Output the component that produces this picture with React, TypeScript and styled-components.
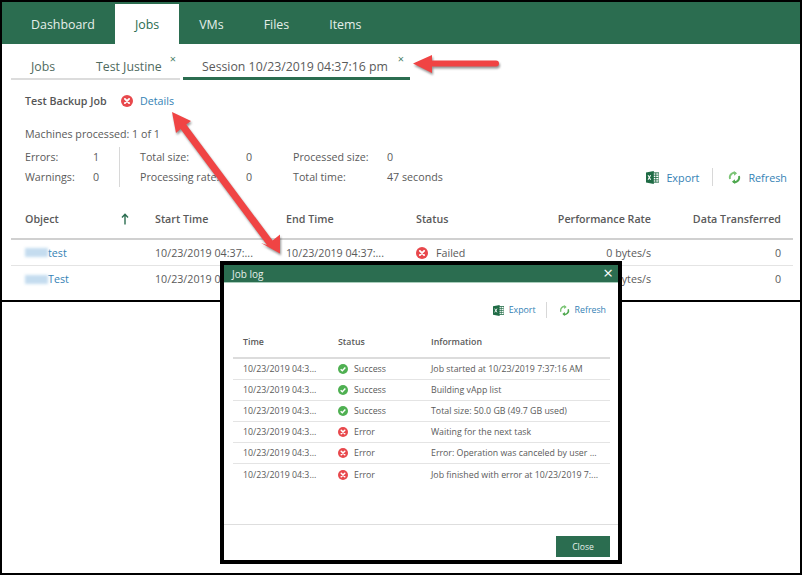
import React from 'react'
import styled, { createGlobalStyle } from 'styled-components'

const GlobalStyle = createGlobalStyle`
  html, body { margin: 0; padding: 0; background: #fff; }
  body { font-family: "Open Sans", "Liberation Sans", sans-serif; color: #5a5a5a; }
  * { box-sizing: border-box; }
`

const GREEN = '#2b6d50'
const LINK = '#3482b5'

const Frame = styled.div`
  position: relative;
  width: 802px;
  height: 575px;
  border: 2px solid #000;
  overflow: hidden;
`

const Panel = styled.section`
  height: 300px;
  border-bottom: 2px solid #000;
`

const Header = styled.header`
  display: flex;
  align-items: flex-end;
  height: 42px;
  padding-left: 9px;
  background: ${GREEN};
`

const MainTab = styled.div<{ $active?: boolean }>`
  display: flex;
  align-items: center;
  height: 40px;
  padding: 0 20px;
  font-size: 12.4px;
  color: ${p => (p.$active ? GREEN : '#e6efea')};
  background: ${p => (p.$active ? '#fff' : 'transparent')};
`

const SubTabs = styled.nav`
  display: flex;
  align-items: flex-end;
  gap: 3px;
  height: 36px;
  padding-left: 9px;
`

const SubGroup = styled.div`
  display: flex;
  width: 169px;
  height: 35px;
  border-bottom: 2px solid #dcdcdc;
`

const SubTab = styled.div<{ $active?: boolean; $width: number; $pad: number }>`
  display: flex;
  width: ${p => p.$width}px;
  padding-left: ${p => p.$pad}px;
  padding-top: 14px;
  font-size: 12.3px;
  line-height: 16px;
  color: #4f6a5e;
  white-space: nowrap;
`

const SessionTab = styled(SubTab)`
  height: 36px;
  padding-top: 15px;
  border-bottom: 3px solid ${GREEN};
  color: #5a5a5a;
`

const TabClose = styled.span<{ $gap: number }>`
  margin-left: ${p => p.$gap}px;
  margin-top: -6px;
  font-size: 11px;
  line-height: 12px;
  color: #4c7f6a;
`

const Summary = styled.div`
  padding: 12px 13px 0 23px;
`

const TitleRow = styled.div`
  display: flex;
  align-items: center;
  height: 18px;
  font-size: 10.7px;
`

const JobTitle = styled.strong`
  width: 96px;
  font-weight: 600;
  color: #555;
`

const LinkText = styled.span`
  color: ${LINK};
`

const DetailsLink = styled(LinkText)`
  margin-left: 7px;
`

const Machines = styled.div`
  margin-top: 15px;
  height: 18px;
  font-size: 10.7px;
  line-height: 18px;
`

const StatsRow = styled.div`
  display: flex;
  align-items: stretch;
  margin-top: 1px;
  height: 46px;
  padding: 3px 0;
`

const StatGroup = styled.dl<{ $label: number; $width: number; $left?: number; $rule?: boolean }>`
  display: grid;
  grid-template-columns: ${p => p.$label}px 1fr;
  grid-auto-rows: 20px;
  align-items: center;
  margin: 0;
  width: ${p => p.$width}px;
  padding-left: ${p => p.$left || 0}px;
  border-right: ${p => (p.$rule ? '1px solid #d8d8d8' : 'none')};
  font-size: 10.7px;
  white-space: nowrap;
`

const StatLabel = styled.dt``
const StatValue = styled.dd`
  margin: 0;
`

const Actions = styled.div<{ $small?: boolean }>`
  display: flex;
  align-items: center;
  justify-content: flex-end;
  gap: ${p => (p.$small ? 5 : 7)}px;
  font-size: ${p => (p.$small ? 8.8 : 10.8)}px;
  color: ${LINK};
`

const MainActions = styled(Actions)`
  margin-left: auto;
  align-self: flex-end;
  height: 20px;
`

const ActionRule = styled.span<{ $small?: boolean }>`
  width: 1px;
  height: ${p => (p.$small ? 16 : 18)}px;
  margin: 0 ${p => (p.$small ? 7 : 8)}px 0 ${p => (p.$small ? 5 : 6)}px;
  background: #d8d8d8;
`

const Table = styled.div`
  margin: 10px 7px 0 9px;
  font-size: 10.7px;
`

const Row = styled.div<{ $head?: boolean }>`
  display: grid;
  grid-template-columns: 96px 34px 131px 130px 112px 123px 130px;
  align-items: center;
  height: ${p => (p.$head ? 40 : 26)}px;
  padding: 0 12px 0 14px;
  border-bottom: ${p => (p.$head ? '2px solid #d0d0d0' : '1px solid #e4e4e4')};
  font-weight: ${p => (p.$head ? 600 : 400)};
  white-space: nowrap;
  &:last-child { border-bottom: none; }
`

const RightCell = styled.span`
  text-align: right;
`

const NameCell = styled.span`
  display: flex;
  align-items: center;
  color: ${LINK};
`

const Smudge = styled.span`
  width: 23px;
  height: 9px;
  background: #c4dcef;
  filter: blur(1.6px);
`

const StatusCell = styled.span<{ $gap: number }>`
  display: flex;
  align-items: center;
  gap: ${p => p.$gap}px;
`

const Modal = styled.div`
  position: absolute;
  left: 218px;
  top: 259px;
  display: flex;
  flex-direction: column;
  width: 402px;
  height: 303px;
  border: 4px solid #000;
  background: #fff;
`

const ModalHeader = styled.div`
  display: flex;
  align-items: center;
  justify-content: space-between;
  height: 18px;
  padding: 0 5px 0 8px;
  background: ${GREEN};
  border-bottom: 1px solid #a9cdbb;
  font-size: 10px;
  color: #e6efea;
`

const ModalClose = styled.span`
  margin-top: -2px;
  font-size: 17px;
  line-height: 15px;
  color: #fff;
`

const ModalActions = styled(Actions)`
  height: 18px;
  margin: 18px 12px 0 0;
`

const ModalTable = styled.div`
  flex: 1;
  margin: 7px 8px 0 9px;
  font-size: 8.8px;
`

const ModalRow = styled.div<{ $head?: boolean }>`
  display: grid;
  grid-template-columns: 95px 93px 1fr;
  align-items: center;
  height: ${p => (p.$head ? 33 : 21)}px;
  padding-left: 10px;
  border-bottom: ${p => (p.$head ? '2px solid #dcdcdc' : '1px solid #e4e4e4')};
  font-weight: ${p => (p.$head ? 600 : 400)};
  white-space: nowrap;
  &:last-child { border-bottom: none; }
`

const ModalFooter = styled.div`
  display: flex;
  justify-content: flex-end;
  height: 36px;
  padding: 11px 8px 0 0;
  border-top: 1px solid #dedede;
`

const CloseButton = styled.button`
  width: 54px;
  height: 21px;
  padding: 0;
  border: none;
  background: ${GREEN};
  color: #e6efea;
  font: 400 8.6px "Open Sans", sans-serif;
`

const ArrowLayer = styled.svg`
  position: absolute;
  left: -2px;
  top: -2px;
  pointer-events: none;
  filter: drop-shadow(1px 2px 1.2px rgba(60, 60, 60, 0.55));
`

const ErrorIcon = ({ size = 12 }: { size?: number }) => (
  <svg width={size} height={size} viewBox="0 0 12 12">
    <circle cx="6" cy="6" r="6" fill="#e8484c" />
    <path d="M3.9 3.9l4.2 4.2M8.1 3.9L3.9 8.1" stroke="#fff" strokeWidth="1.9" strokeLinecap="round" />
  </svg>
)

const SuccessIcon = () => (
  <svg width={10} height={10} viewBox="0 0 12 12">
    <circle cx="6" cy="6" r="6" fill="#4fb052" />
    <path d="M3.2 6.2l2 2 3.6-4" stroke="#fff" strokeWidth="1.7" fill="none" />
  </svg>
)

const ExcelIcon = ({ size }: { size: number }) => (
  <svg width={size} height={size} viewBox="0 0 14 14">
    <rect x="7" y="2" width="7" height="10" fill="#fff" stroke="#1f6b45" strokeWidth="1" />
    <path d="M7.5 4.5h6M7.5 7h6M7.5 9.5h6M10.5 2v10" stroke="#1f6b45" strokeWidth="0.9" />
    <path d="M0 1.6L8.4 0v14L0 12.4z" fill="#1f6b45" />
    <path d="M2.2 4.6l2.8 4.8M5 4.6L2.2 9.4" stroke="#fff" strokeWidth="1.1" />
  </svg>
)

const RefreshIcon = ({ size }: { size: number }) => (
  <svg width={size} height={size} viewBox="0 0 14 14" fill="none">
    <path d="M2.2 8.6A5 5 0 0 1 8.4 2.2" stroke="#7cc576" strokeWidth="2" />
    <path d="M6.2 0l3.6 2.4L6.6 5z" fill="#7cc576" />
    <path d="M11.8 5.4A5 5 0 0 1 5.6 11.8" stroke="#4fa84f" strokeWidth="2" />
    <path d="M7.8 14L4.2 11.6 7.4 9z" fill="#4fa84f" />
  </svg>
)

const SortArrow = () => (
  <svg width={8} height={12} viewBox="0 0 8 12">
    <path d="M4 11.5V1.5M1 4.5L4 1.2l3 3.3" stroke={GREEN} strokeWidth="1.4" fill="none" />
  </svg>
)

const logRows = [
  ['Success', 'Job started at 10/23/2019 7:37:16 AM'],
  ['Success', 'Building vApp list'],
  ['Success', 'Total size: 50.0 GB (49.7 GB used)'],
  ['Error', 'Waiting for the next task'],
  ['Error', 'Error: Operation was canceled by user ...'],
  ['Error', 'Job finished with error at 10/23/2019 7:...'],
]

const jobRows = ['test', 'Test']

export default function App() {
  return (
    <Frame>
      <GlobalStyle />
      <Panel>
        <Header>
          <MainTab>Dashboard</MainTab>
          <MainTab $active>Jobs</MainTab>
          <MainTab>VMs</MainTab>
          <MainTab>Files</MainTab>
          <MainTab>Items</MainTab>
        </Header>
        <SubTabs>
          <SubGroup>
            <SubTab $width={85} $pad={20}>Jobs</SubTab>
            <SubTab $width={84} $pad={0}>
              Test Justine<TabClose $gap={8}>×</TabClose>
            </SubTab>
          </SubGroup>
          <SessionTab $width={227} $pad={19}>
            Session 10/23/2019 04:37:16 pm<TabClose $gap={10}>×</TabClose>
          </SessionTab>
        </SubTabs>
        <Summary>
          <TitleRow>
            <JobTitle>Test Backup Job</JobTitle>
            <ErrorIcon />
            <DetailsLink>Details</DetailsLink>
          </TitleRow>
          <Machines>Machines processed: 1 of 1</Machines>
          <StatsRow>
            <StatGroup $label={68} $width={95} $rule>
              <StatLabel>Errors:</StatLabel>
              <StatValue>1</StatValue>
              <StatLabel>Warnings:</StatLabel>
              <StatValue>0</StatValue>
            </StatGroup>
            <StatGroup $label={106} $width={173} $left={20}>
              <StatLabel>Total size:</StatLabel>
              <StatValue>0</StatValue>
              <StatLabel>Processing rate:</StatLabel>
              <StatValue>0</StatValue>
            </StatGroup>
            <StatGroup $label={94} $width={180}>
              <StatLabel>Processed size:</StatLabel>
              <StatValue>0</StatValue>
              <StatLabel>Total time:</StatLabel>
              <StatValue>47 seconds</StatValue>
            </StatGroup>
            <MainActions>
              <ExcelIcon size={13} />
              Export
              <ActionRule />
              <RefreshIcon size={13} />
              Refresh
            </MainActions>
          </StatsRow>
        </Summary>
        <Table>
          <Row $head>
            <span>Object</span>
            <SortArrow />
            <span>Start Time</span>
            <span>End Time</span>
            <span>Status</span>
            <RightCell>Performance Rate</RightCell>
            <RightCell>Data Transferred</RightCell>
          </Row>
          {jobRows.map(name => (
            <Row key={name}>
              <NameCell>
                <Smudge />
                {name}
              </NameCell>
              <span />
              <span>10/23/2019 04:37:...</span>
              <span>10/23/2019 04:37:...</span>
              <StatusCell $gap={8}>
                <ErrorIcon />
                Failed
              </StatusCell>
              <RightCell>0 bytes/s</RightCell>
              <RightCell>0</RightCell>
            </Row>
          ))}
        </Table>
      </Panel>

      <ArrowLayer width={802} height={575} viewBox="0 0 802 575">
        <path d="M413 63.5L432 55v5.5h64a3 3 0 0 1 0 6h-64V73z" fill="#f04444" />
        <path
          d="M172 112L191 121L186.2 124.6L272.6 240.6L280 234.5L280 253.5L261 243L267 245L180.6 129L176 133z"
          fill="#f04444"
        />
      </ArrowLayer>

      <Modal>
        <ModalHeader>
          Job log
          <ModalClose>×</ModalClose>
        </ModalHeader>
        <ModalActions $small>
          <ExcelIcon size={11} />
          Export
          <ActionRule $small />
          <RefreshIcon size={11} />
          Refresh
        </ModalActions>
        <ModalTable>
          <ModalRow $head>
            <span>Time</span>
            <span>Status</span>
            <span>Information</span>
          </ModalRow>
          {logRows.map(([status, info]) => (
            <ModalRow key={info}>
              <span>10/23/2019 04:3...</span>
              <StatusCell $gap={6}>
                {status === 'Success' ? <SuccessIcon /> : <ErrorIcon size={10} />}
                {status}
              </StatusCell>
              <span>{info}</span>
            </ModalRow>
          ))}
        </ModalTable>
        <ModalFooter>
          <CloseButton>Close</CloseButton>
        </ModalFooter>
      </Modal>
    </Frame>
  )
}
